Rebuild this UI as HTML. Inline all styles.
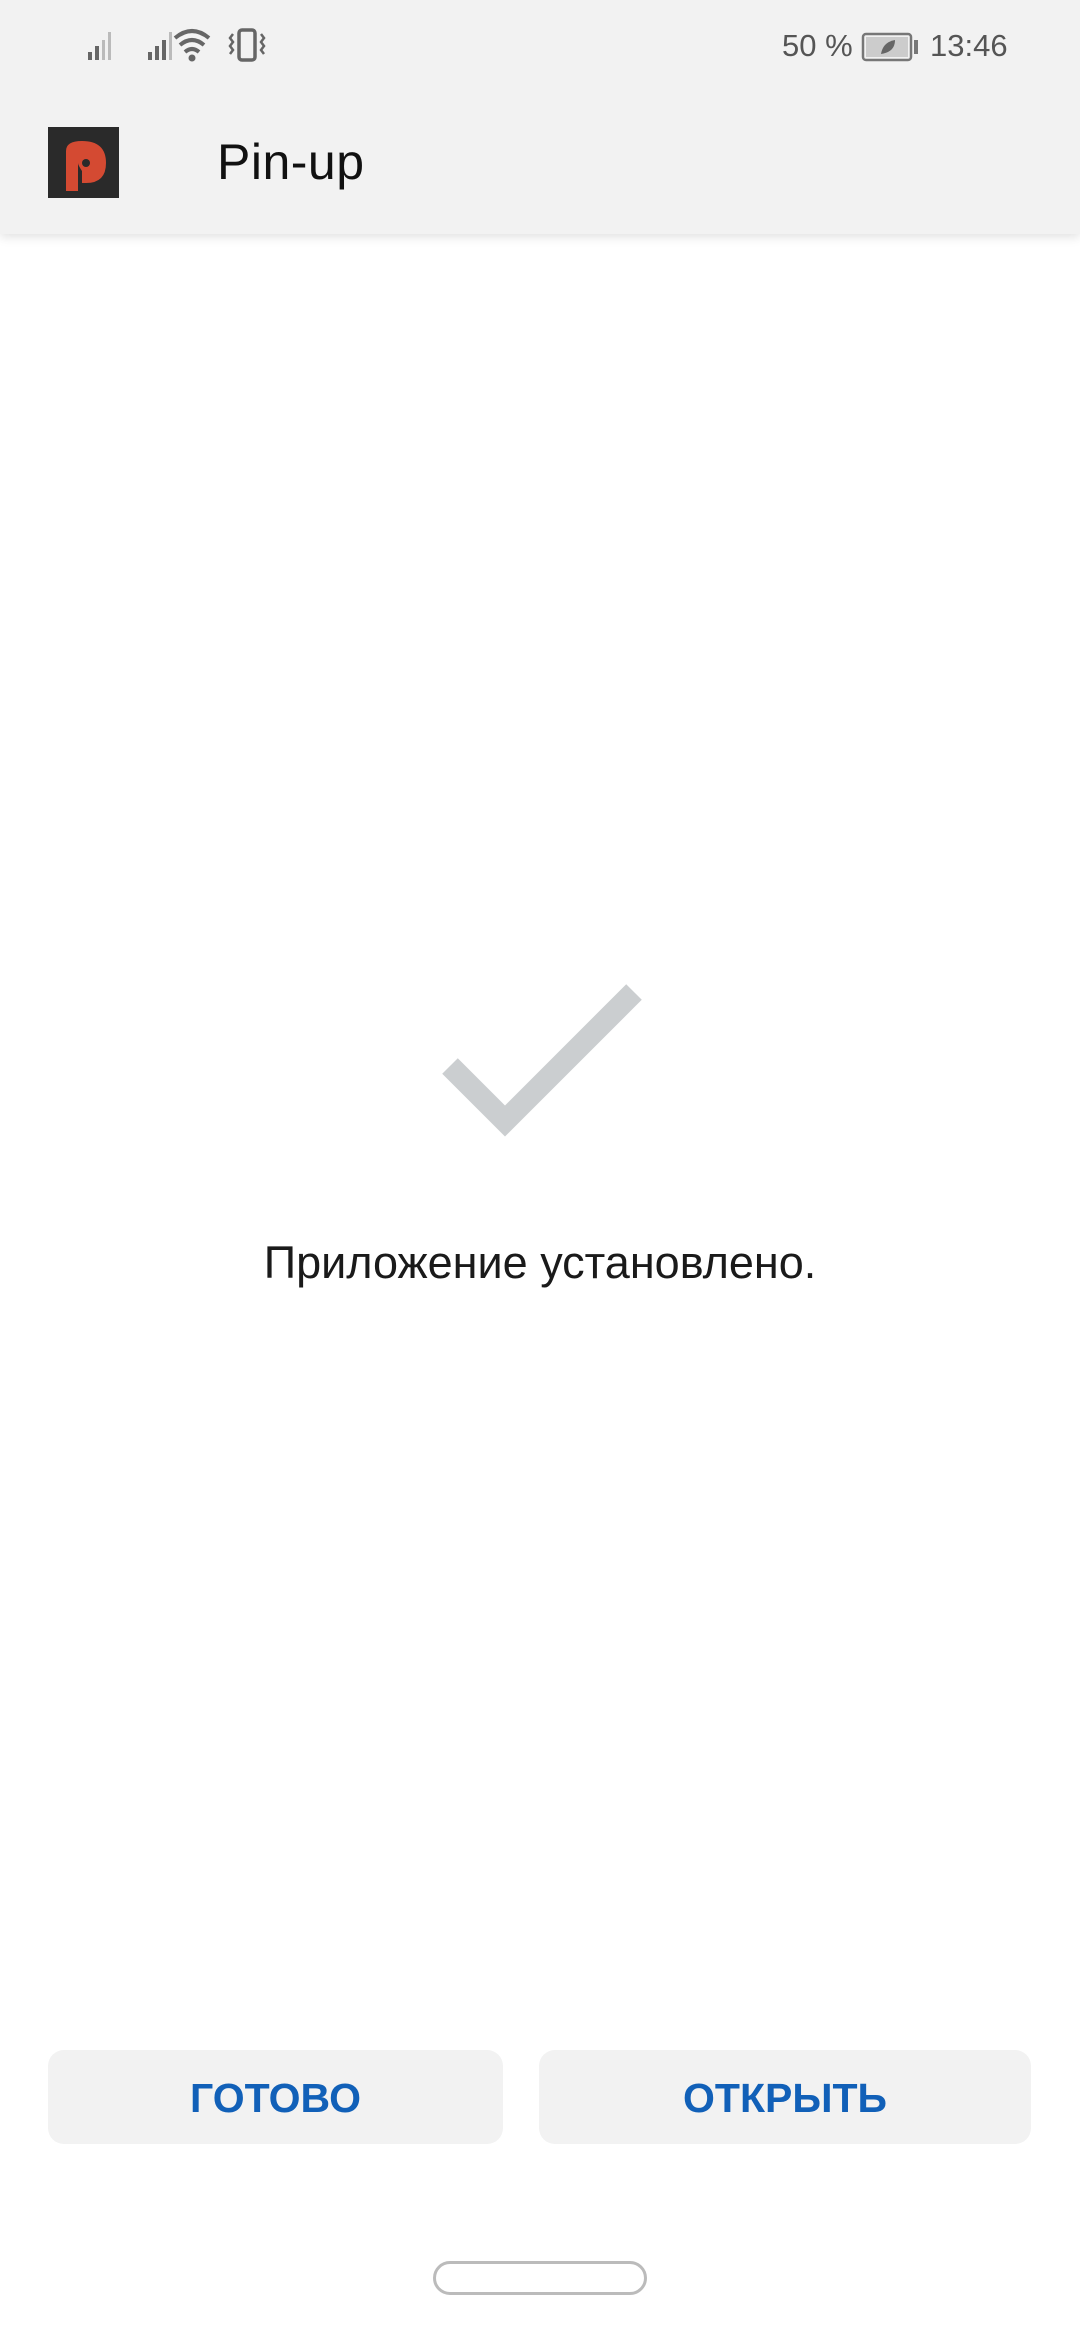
<!DOCTYPE html>
<html><head><meta charset="utf-8"><style>
body{margin:0;width:1080px;height:2340px;background:#fff;position:relative;overflow:hidden;font-family:"Liberation Sans","DejaVu Sans",sans-serif}
.hdr{position:absolute;left:0;top:0;width:1080px;height:234px;background:#f2f2f2;box-shadow:0 3px 10px rgba(0,0,0,.12)}
.st{position:absolute;top:28px;font-size:31px;color:#555}
.title{position:absolute;left:217px;top:133px;font-size:50px;color:#111;letter-spacing:0.5px}
.btn{position:absolute;top:2050px;height:94px;background:#f2f2f2;border-radius:16px;color:#1160b8;font-weight:bold;font-size:41px;text-align:center;line-height:96px}
</style></head><body>
<div class="hdr">
<svg style="position:absolute;left:85px;top:26px" width="200" height="40" viewBox="0 0 200 40">
<g fill="#666"><rect x="3" y="26" width="4" height="8"/><rect x="10" y="20" width="4" height="14"/><rect x="17" y="14" width="3" height="20" fill="#bbb"/><rect x="23" y="6" width="3" height="28" fill="#bbb"/>
<rect x="63" y="26" width="4" height="8"/><rect x="70" y="20" width="4" height="14"/><rect x="77" y="14" width="4" height="20"/><rect x="84" y="6" width="3" height="28" fill="#bbb"/></g>
<g fill="none" stroke="#666" stroke-width="4"><path d="M90 12 Q107 -2 124 12"/><path d="M95 19 Q107 9 119 19"/><path d="M100 26 Q107 20 114 26"/></g>
<circle cx="107" cy="32" r="3.5" fill="#666"/>
<rect x="154" y="4" width="16" height="30" rx="3" fill="none" stroke="#666" stroke-width="3.5"/>
<path d="M148 8 l-3 4 3 4 -3 4 3 4 -3 4 M176 8 l3 4 -3 4 3 4 -3 4 3 4" fill="none" stroke="#666" stroke-width="2.5"/>
</svg>
<div class="st" style="left:782px">50 %</div>
<svg style="position:absolute;left:861px;top:32px" width="60" height="30" viewBox="0 0 60 30">
<rect x="2" y="2" width="48" height="26" rx="3" fill="none" stroke="#777" stroke-width="2.5"/>
<rect x="5" y="5" width="42" height="20" fill="#ccc"/>
<rect x="53" y="8" width="4" height="14" fill="#777"/>
<path d="M20 22 Q22 10 34 8 Q34 20 20 22Z" fill="#666"/>
</svg>
<div class="st" style="left:930px">13:46</div>
<div style="position:absolute;left:48px;top:127px;width:71px;height:71px;background:#2a2a2a">
<svg width="71" height="71" viewBox="0 0 71 71"><path d="M18 64 L18 24 Q18 14 34 14 Q58 14 58 36 Q58 56 38 56 L34 56 L34 44 Q30 38 30 36 L30 64Z" fill="#d44a32"/><circle cx="38" cy="36" r="4" fill="#2a2a2a"/></svg>
</div>
<div class="title">Pin-up</div>
</div>
<svg style="position:absolute;left:0;top:0" width="1080" height="1300">
<polyline points="450,1066 505,1121 634,992" fill="none" stroke="#cbced0" stroke-width="22"/>
</svg>
<div style="position:absolute;left:0;width:1080px;top:1237px;text-align:center;font-size:45px;color:#1a1a1a">Приложение установлено.</div>
<div class="btn" style="left:48px;width:455px">ГОТОВО</div>
<div class="btn" style="left:539px;width:492px">ОТКРЫТЬ</div>
<div style="position:absolute;left:433px;top:2261px;width:208px;height:28px;border:3px solid #bbb;border-radius:18px"></div>
</body></html>
